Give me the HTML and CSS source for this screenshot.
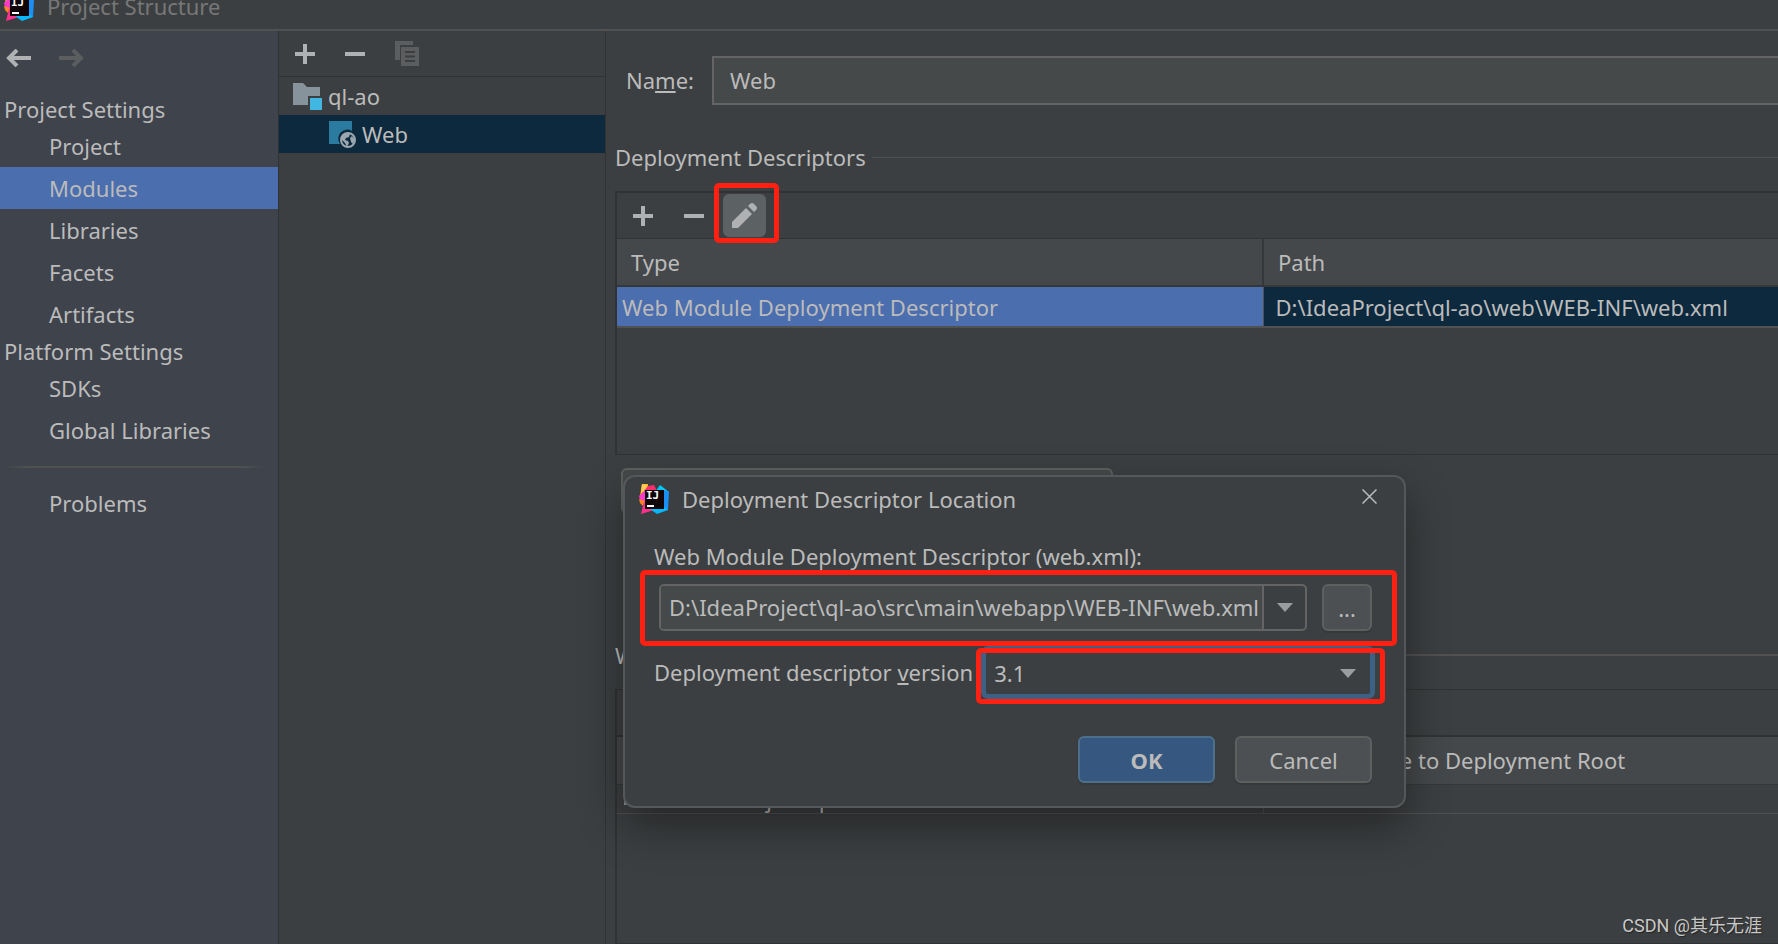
FILE: index.html
```html
<!DOCTYPE html>
<html lang="en">
<head>
<meta charset="utf-8">
<title>Project Structure</title>
<link rel="stylesheet" href="styles.css">
</head>
<body>
<svg class="defs" aria-hidden="true">
  <symbol id="logo" viewBox="0 0 30 30">
    <path fill="#fdb60d" d="M3 0 9 0 9 6 1 12z"/>
    <path fill="#fdc95a" d="M3 0 8 1 7 6 2 8z"/>
    <path fill="#fe2e6a" d="M9 2 15 1 18 7 8 14 5 7z"/>
    <path fill="#f83ac8" d="M5 7 0 12 2 20 8 20 8 6z"/>
    <path fill="#fd8224" d="M0 15 6 17 4 22 1 19z"/>
    <path fill="#ff318c" d="M5 18 2 30 15 26 15 20z"/>
    <path fill="#00c8f8" d="M21 1 30 8 27 16 16 8z"/>
    <path fill="#1a8ff5" d="M25 6 30 8 29 26 23 27z"/>
    <path fill="#08b8ff" d="M24 22 29 26 18 30 11 25z"/>
    <path fill="#100508" d="M6 6h19v19H6z"/>
    <text x="7" y="15" fill="#fff" class="logo-text">IJ</text>
    <path fill="#fff" d="M8 21h7v2H8z"/>
  </symbol>
  <symbol id="plus" viewBox="0 0 20 20"><path d="M8 0h4v8h8v4h-8v8H8v-8H0V8h8z"/></symbol>
  <symbol id="minus" viewBox="0 0 20 20"><path d="M0 8h20v4H0z"/></symbol>
  <symbol id="arrow" viewBox="0 0 26 18"><path fill="none" stroke="currentColor" stroke-width="4" d="M25 9H3M11 1 3 9l8 8"/></symbol>
  <symbol id="down" viewBox="0 0 16 9"><path d="M0 0h16L8 9z"/></symbol>
</svg>

<header class="titlebar">
  <svg class="logo"><use href="#logo"/></svg>
  <h1>Project Structure</h1>
</header>

<div class="window">
  <nav class="sidebar">
    <div class="history">
      <button aria-label="Back"><svg><use href="#arrow"/></svg></button>
      <button class="forward" aria-label="Forward" disabled><svg><use href="#arrow"/></svg></button>
    </div>
    <h2>Project Settings</h2>
    <a href="#">Project</a>
    <a href="#" class="current">Modules</a>
    <a href="#">Libraries</a>
    <a href="#">Facets</a>
    <a href="#">Artifacts</a>
    <h2>Platform Settings</h2>
    <a href="#">SDKs</a>
    <a href="#">Global Libraries</a>
    <hr>
    <a href="#">Problems</a>
  </nav>

  <section class="modules">
    <div class="toolbar">
      <button aria-label="Add"><svg><use href="#plus"/></svg></button>
      <button aria-label="Remove"><svg><use href="#minus"/></svg></button>
      <button class="copy" aria-label="Copy" disabled>
        <svg viewBox="0 0 24 25"><path d="M0 0h18v4H5v15H0z"/><path fill-rule="evenodd" d="M6 6h18v19H6zM10 10v2h10v-2zM10 14.500v2h10v-2zM10 19v2h10v-2z"/></svg>
      </button>
    </div>
    <ul class="tree">
      <li>
        <svg viewBox="0 0 29 27"><path fill="#87939a" d="M0 0h10l4 4h13v9H15v9H0z"/><path fill="#40b6e0" d="M17 15h12v12H17z"/></svg>
        ql-ao
      </li>
      <li class="child">
        <svg viewBox="0 0 29 27"><path fill="#2a7b9f" d="M0 0h23v10A9 9 0 0 0 11 23H0z"/><circle cx="19" cy="19" r="7" fill="none" stroke="#9aa7b0" stroke-width="2"/><path fill="#9aa7b0" d="M13 14l5-2 3 1-1 3-3 1-1 2 3 1 1 2-2 4-2-4-4-4zM23 15l3 4-2 4-2-2-1-4z"/></svg>
        Web
      </li>
    </ul>
  </section>

  <main class="editor">
    <div class="name-row">
      <label for="name">Na<u>m</u>e:</label>
      <input id="name" value="Web">
    </div>

    <h3 class="first">Deployment Descriptors</h3>
    <div class="panel descriptors">
      <div class="toolbar">
        <button aria-label="Add"><svg><use href="#plus"/></svg></button>
        <button aria-label="Remove"><svg><use href="#minus"/></svg></button>
        <button class="edit" aria-label="Edit">
          <svg viewBox="0 0 26 26"><path d="M0 19 14 5l6 6L6 25H0z"/><path d="M16 3l2-2q2-2 4 0l2 2q2 2 0 4l-2 2z"/></svg>
          <span class="mark"></span>
        </button>
      </div>
      <table>
        <thead><tr><th>Type</th><th>Path</th></tr></thead>
        <tbody><tr><td class="focus">Web Module Deployment Descriptor</td><td>D:\IdeaProject\ql-ao\web\WEB-INF\web.xml</td></tr></tbody>
      </table>
    </div>
    <button class="wide" aria-label="Add Application Server specific descriptor"></button>

    <h3 class="second">Web Resource Directories</h3>
    <div class="panel resources">
      <div class="toolbar"></div>
      <table>
        <thead><tr><th>Web Resource Directory</th><th>Path Relative to Deployment Root</th></tr></thead>
        <tbody><tr><td><span class="cell"><i></i>D:\IdeaProject\ql-ao\web</span></td><td>/</td></tr></tbody>
      </table>
    </div>
  </main>
</div>

<div class="dialog" role="dialog" aria-labelledby="dialog-title">
  <div class="dialog-head">
    <svg class="logo"><use href="#logo"/></svg>
    <h2 id="dialog-title">Deployment Descriptor Location</h2>
    <button class="close" aria-label="Close"><svg viewBox="0 0 15 15"><path fill="none" stroke="#bbb" stroke-width="1.500" d="M.5.5l14 14M14.500.5l-14 14"/></svg></button>
  </div>
  <label class="path-label" for="path">Web Module Deployment Descriptor (web.xml):</label>
  <div class="path-row">
    <div class="combo">
      <input id="path" value="D:\IdeaProject\ql-ao\src\main\webapp\WEB-INF\web.xml">
      <button aria-label="Show recent paths"><svg class="down"><use href="#down"/></svg></button>
    </div>
    <button class="button browse">...</button>
    <span class="mark"></span>
  </div>
  <div class="version-row">
    <label for="version">Deployment descriptor <u>v</u>ersion</label>
    <div class="select">
      <select id="version"><option>3.1</option></select>
      <svg class="down"><use href="#down"/></svg>
      <span class="mark"></span>
    </div>
  </div>
  <div class="actions">
    <button class="button primary">OK</button>
    <button class="button">Cancel</button>
  </div>
</div>

<div class="watermark">CSDN @其乐无涯</div>
</body>
</html>
```
FILE: styles.css
```css
* { box-sizing: border-box; }
body {
  margin: 0;
  height: 100vh;
  display: flex;
  flex-direction: column;
  position: relative;
  overflow: hidden;
  background: #3c3f41;
  color: #bbb;
  font: 22px/30px "Noto Sans", "Open Sans", sans-serif;
}
h1, h2, h3 { margin: 0; font-size: 22px; font-weight: 400; }
button, input, select { font: inherit; color: inherit; margin: 0; padding: 0; border: 0; background: none; outline: 0; }
svg { display: block; fill: #afb1b3; flex: none; }
u { text-underline-offset: 2px; text-decoration-thickness: 2px; text-decoration-skip-ink: none; }
.defs { position: absolute; width: 0; height: 0; }
.logo { width: 30px; height: 30px; }
.logo-text { font: bold 11px "DejaVu Sans Mono", monospace; }
.down { width: 16px; height: 9px; fill: #9a9da0; }

.titlebar {
  flex: none;
  display: flex;
  align-items: center;
  gap: 13px;
  height: 31px;
  padding: 0 4px 17px;
  border-bottom: 2px solid #515151;
  overflow: hidden;
}
.titlebar h1 { color: #777; }

.window { flex: 1; min-height: 0; display: flex; }

.sidebar { width: 279px; flex: none; background: #3f434c; border-right: 1px solid #2f3235; }
.history { display: flex; align-items: flex-start; gap: 26px; padding: 18px 6px; height: 62px; }
.history svg { width: 26px; height: 18px; color: #afb1b3; }
.history .forward svg { color: #5b5d5f; transform: scaleX(-1); }
.sidebar h2 { padding-left: 4px; line-height: 32px; }
.sidebar a { display: block; padding-left: 49px; line-height: 42px; color: inherit; text-decoration: none; }
.sidebar .current { background: #4b6eaf; }
.sidebar hr { height: 2px; margin: 15px 12px 14px 4px; border: 0; background: linear-gradient(90deg, transparent, #515151 10%, #515151 90%, transparent); }

.toolbar { display: flex; align-items: center; height: 46px; border-bottom: 1px solid #323232; }
.toolbar svg { width: 20px; height: 20px; }

.modules { width: 327px; flex: none; border-right: 1px solid #323232; }
.modules .toolbar { gap: 30px; padding-left: 16px; }
.toolbar .copy svg { width: 24px; height: 25px; fill: #5b5d5f; }
.tree { list-style: none; margin: 0; padding: 0; }
.tree li { display: flex; align-items: center; gap: 6px; height: 38px; padding-left: 14px; }
.tree svg { width: 29px; height: 27px; }
.tree .child { padding-left: 50px; gap: 4px; background: #0d293e; }

.editor { flex: 1; min-width: 0; display: flex; flex-direction: column; padding: 25px 0 0 9px; }
.name-row { display: flex; align-items: center; gap: 18px; padding-left: 11px; }
.name-row label { padding-bottom: 2px; }
.name-row input { flex: 1; min-width: 0; height: 49px; padding: 0 16px 2px; border: 2px solid #646464; border-right: 0; background: #45494a; }
h3 { display: flex; align-items: center; gap: 6px; line-height: 30px; white-space: nowrap; }
h3::after { content: ""; flex: 1; height: 1px; background: #515151; }
.first { margin-top: 37px; }
.second { margin-top: 126px; }
.second::after { height: 2px; }

.panel { border: 2px solid #323232; border-width: 2px 0 1px 2px; }
.descriptors { height: 264px; margin: 19px 0 13px; }
.descriptors .toolbar { gap: 31px; padding-left: 16px; }
.edit { position: relative; display: grid; place-items: center; width: 43px; height: 43px; margin-left: -12px; border-radius: 6px; background: #5c6164; }
.toolbar .edit svg { width: 26px; height: 26px; }
.mark { position: absolute; border: 5px solid #ff2011; border-radius: 5px; pointer-events: none; z-index: 2; }
.edit .mark { inset: -11px -13px -6px -9px; }

table { width: 100%; table-layout: fixed; border-collapse: collapse; }
th, td { height: 41px; padding: 0 13px; text-align: left; font-weight: 400; white-space: nowrap; }
th { height: 47px; padding: 0 14px; background: #45484a; }
th:first-child { width: 646px; border-right: 2px solid #35383a; }
thead tr { border-bottom: 2px solid #35383a; }
.descriptors td { padding-left: 12px; background: #0d293e; border-bottom: 2px solid #515151; }
.descriptors td:first-child { padding-left: 5px; border-right: 1px solid #515151; background: #4b6eaf; }

.wide { width: 492px; height: 46px; margin-left: 6px; border: 2px solid #5e6060; border-radius: 6px; background: #45494a; }
.resources { flex: 1; margin-top: 19px; border-top-width: 1px; }
.resources .toolbar { height: 47px; border-bottom-width: 2px; }
.resources thead tr { border-bottom-width: 1px; }
.resources td { height: 29px; padding: 0 7px; border-bottom: 1px solid #515151; line-height: 28px; }
.resources td:first-child { border-right: 1px solid #515151; }
.resources .cell { display: flex; align-items: flex-start; gap: 9px; }
.cell i { width: 22px; height: 20px; background: #87939a; }

.dialog {
  position: absolute;
  left: 623px;
  top: 475px;
  width: 783px;
  padding: 7px 32px 23px 29px;
  border: 2px solid #555758;
  border-radius: 12px;
  background: #3c3f41;
  box-shadow: 0 18px 44px rgba(0, 0, 0, .4);
}
.dialog-head { display: flex; align-items: center; gap: 13px; margin-left: -15px; height: 30px; }
.close { margin: 0 -5px 5px auto; }
.close svg { width: 15px; height: 15px; }
.path-label { display: block; margin: 27px 0 13px; }
.path-row { position: relative; display: flex; gap: 15px; padding-left: 5px; }
.path-row .mark { inset: -14px -25px -15px -14px; }
.combo { flex: 1; min-width: 0; display: flex; height: 47px; border: 2px solid #646464; border-radius: 5px; overflow: hidden; }
.combo input { flex: 1; min-width: 0; padding: 0 0 2px 8px; background: #45494a; }
.combo button { display: grid; place-items: center; width: 43px; border-left: 2px solid #646464; }
.version-row { display: flex; align-items: center; gap: 8px; margin-top: 15px; }
.version-row label { flex: none; padding-bottom: 2px; }
.select { position: relative; flex: 1; height: 53px; margin-right: -3px; }
.select select { appearance: none; width: 100%; height: 100%; padding: 0 8px; border: 5px solid #3d6185; border-radius: 7px; background: #3c3f41; }
.select .down { position: absolute; right: 19px; top: 23px; }
.select .mark { inset: 2px -10px -5px -5px; }
.actions { display: flex; justify-content: flex-end; gap: 20px; margin-top: 37px; }
.button { width: 137px; height: 47px; border: 2px solid #5e6060; border-radius: 6px; background: #4c5052; box-shadow: 0 2px 1px #36393a; }
.browse { width: 50px; }
.primary { border-color: #4c708c; background: #365880; font-weight: 700; }

.watermark { position: absolute; right: 16px; bottom: 3px; font: 18px/30px Roboto, "Noto Sans CJK SC", sans-serif; color: #c8c8c8; text-shadow: 1px 1px 1px #222; }
```
